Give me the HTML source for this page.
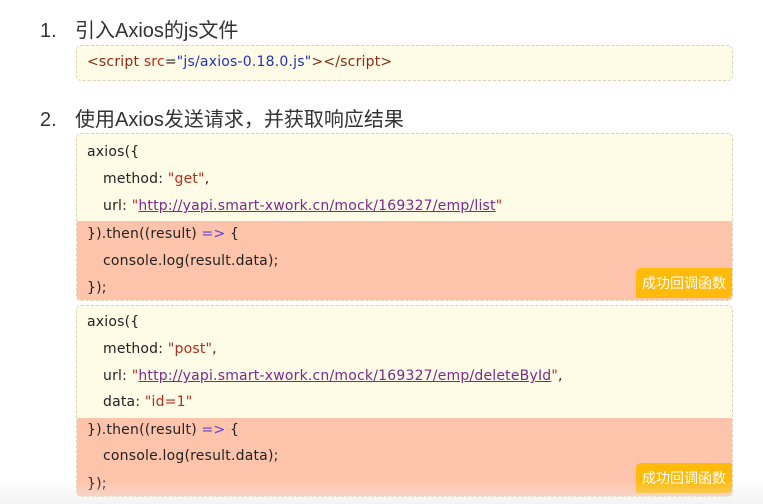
<!DOCTYPE html>
<html><head><meta charset="utf-8"><style>
body{margin:0;width:763px;height:504px;background:#fff;position:relative;overflow:hidden;font-family:"Liberation Sans","Noto Sans CJK SC",sans-serif;color:#222}
.h{position:absolute;left:40px;font-size:20px;color:#333;white-space:nowrap}
.h i{font-style:normal;display:inline-block;width:35px}
.box{position:absolute;left:76px;width:655px;border:1px dashed #d8d2b8;border-radius:5px;background:#fefbe6;overflow:hidden}
.red{position:absolute;left:0;right:0;background:#fec3ab}
.l{position:absolute;font-family:"DejaVu Sans","Noto Sans CJK SC",sans-serif;font-size:14px;letter-spacing:0.2px;white-space:nowrap;color:#222}
.s{color:#b32d1e}.u{color:#7a2a8c;text-decoration:underline}.b{color:#2233bb}.p{color:#5b3fd0}.t{color:#8b2a10}
.badge{position:absolute;left:636px;width:96px;height:30px;background:#ffba0a;border-radius:5px 0 5px 0;color:#fff;font-size:14px;line-height:30px;text-align:center}
.fade{position:absolute;left:0;right:0;top:480px;height:24px;background:linear-gradient(rgba(255,255,255,0.0),rgba(235,235,235,0.6))}
</style></head><body>
<div class="h" style="top:14px"><i>1.</i>引入Axios的js文件</div>
<div class="box" style="top:45px;height:34px"><div class="l" style="left:10px;top:8px"><span class="t">&lt;script</span> <span class="s">src</span>=<span class="b">"js/axios-0.18.0.js"</span><span class="t">&gt;&lt;/script&gt;</span></div></div>
<div class="h" style="top:103px"><i>2.</i>使用Axios发送请求，并获取响应结果</div>
<div class="box" style="top:133px;height:166px">
<div class="red" style="top:87px;height:80px"></div>
<div class="l" style="left:10px;top:10px">axios({</div>
<div class="l" style="left:26px;top:37px">method: <span class="s">"get"</span>,</div>
<div class="l" style="left:26px;top:64px">url: <span class="s">"</span><span class="u">http://yapi.smart-xwork.cn/mock/169327/emp/list</span><span class="s">"</span></div>
<div class="l" style="left:10px;top:92px">}).then((result) <span class="p">=&gt;</span> {</div>
<div class="l" style="left:26px;top:119px">console.log(result.data);</div>
<div class="l" style="left:10px;top:146px">});</div>
</div>
<div class="badge" style="top:268px">成功回调函数</div>
<div class="box" style="top:305px;height:190px">
<div class="red" style="top:112px;height:80px"></div>
<div class="l" style="left:10px;top:8px">axios({</div>
<div class="l" style="left:26px;top:35px">method: <span class="s">"post"</span>,</div>
<div class="l" style="left:26px;top:62px">url: <span class="s">"</span><span class="u">http://yapi.smart-xwork.cn/mock/169327/emp/deleteById</span><span class="s">"</span>,</div>
<div class="l" style="left:26px;top:88px">data: <span class="s">"id=1"</span></div>
<div class="l" style="left:10px;top:116px">}).then((result) <span class="p">=&gt;</span> {</div>
<div class="l" style="left:26px;top:142px">console.log(result.data);</div>
<div class="l" style="left:10px;top:170px">});</div>
</div>
<div class="badge" style="top:463px">成功回调函数</div>
<div class="fade"></div>
</body></html>
